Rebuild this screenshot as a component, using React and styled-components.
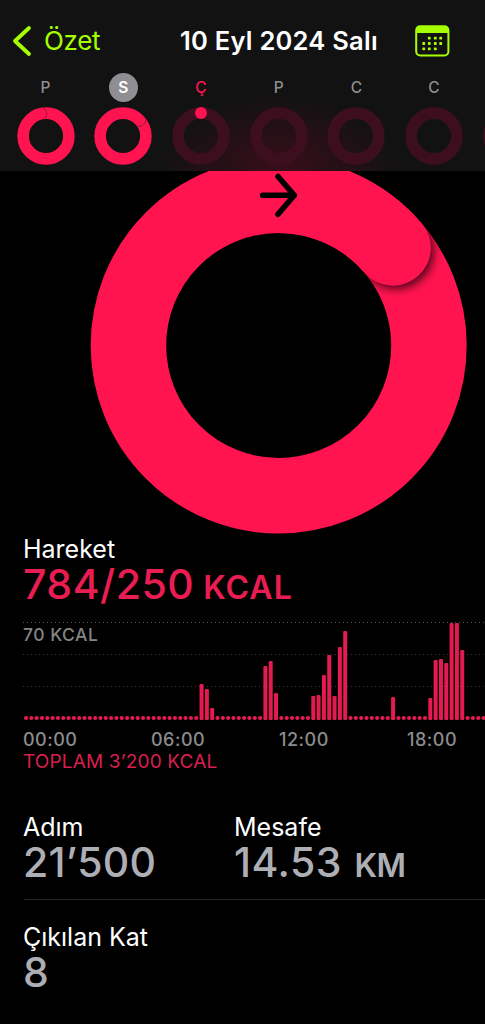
import styled, { createGlobalStyle } from 'styled-components';

const PINK = '#ff1450';
const LIME = '#a6ff00';

const GlobalStyle = createGlobalStyle`
  body {
    margin: 0;
    background: #000;
    font-family: Inter, 'Liberation Sans', sans-serif;
  }
`;

const Screen = styled.div`
  width: 485px;
  height: 1024px;
  overflow: hidden;
  background: #000;
  color: #fff;
`;

const Header = styled.header`
  box-sizing: border-box;
  height: 171px;
  padding-top: 18px;
  overflow: hidden;
  background: radial-gradient(ellipse 120px 75px at 279px 171px, #3a0d1a, rgba(18, 18, 18, 0)), #121212;
`;

const NavBar = styled.nav`
  display: grid;
  grid-template-columns: 180px 1fr auto;
  align-items: center;
  height: 45px;
  padding-right: 35px;
`;

const BackButton = styled.a`
  display: flex;
  align-items: center;
  gap: 12px;
  padding-left: 12px;
  color: ${LIME};
  font-size: 26px;
  letter-spacing: -0.3px;
`;

const NavTitle = styled.h1`
  margin: 0;
  font-size: 25.5px;
  font-weight: 600;
  letter-spacing: 0.25px;
  line-height: 30px;
  white-space: nowrap;
`;

const Week = styled.div`
  display: flex;
  margin: 10px 0 0 6.75px;
`;

const Day = styled.div`
  display: flex;
  flex: none;
  flex-direction: column;
  align-items: center;
  gap: 5px;
  width: 77.7px;
`;

const DayLetter = styled.span`
  width: 29px;
  height: 29px;
  border-radius: 50%;
  background: ${(props) => (props.$selected ? '#8e8e93' : 'transparent')};
  color: ${(props) => props.$color || '#8e8e8e'};
  font-size: 15.5px;
  font-weight: ${(props) => (props.$selected ? 600 : 500)};
  line-height: 30px;
  text-align: center;
`;

const RingHero = styled.section`
  height: 363px;

  svg {
    display: block;
  }
`;

const Content = styled.main`
  padding-left: 23px;
`;

const Label = styled.h2`
  margin: 0;
  font-size: 25px;
  font-weight: 400;
  line-height: 30px;
`;

const Value = styled.p`
  margin: 0;
  color: ${(props) => props.$color || '#aeaeb5'};
  font-size: 41px;
  font-weight: 500;
  line-height: 41px;
  letter-spacing: ${(props) => props.$spacing || '0.5px'};
  white-space: nowrap;
`;

const Unit = styled.span`
  margin-left: ${(props) => props.$gap}px;
  font-size: 32px;
  font-weight: 600;
  line-height: 1;
  letter-spacing: ${(props) => props.$spacing || '0'};
`;

const Chart = styled.svg`
  display: block;
`;

const Axis = styled.div`
  display: flex;
  height: 22px;
  color: #8c8c8c;
  font-size: 18px;
  font-weight: 500;
  line-height: 23.5px;
  letter-spacing: 0.5px;

  span {
    flex: none;
    width: 128px;
  }
`;

const Total = styled.p`
  margin: 0;
  color: #d81f50;
  font-size: 19px;
  line-height: 24px;
  letter-spacing: 0.15px;
`;

const Stats = styled.div`
  display: flex;
  margin-top: ${(props) => props.$top}px;
`;

const Stat = styled.div`
  flex: none;
  width: 211px;
`;

const Divider = styled.hr`
  height: 1px;
  margin: 16px 0 0 1px;
  border: 0;
  background: #242426;
`;

const days = [
  { letter: 'P', progress: 0.97 },
  { letter: 'S', progress: 0.137, selected: true, color: '#fff' },
  { letter: 'Ç', progress: 0, color: PINK },
  { letter: 'P' },
  { letter: 'C' },
  { letter: 'C' },
  { letter: '' },
];

// quarter-hour slots holding activity, value is the bar height in px
const activity = {
  33: 36, 34: 31, 35: 12,
  45: 54, 46: 59, 47: 27,
  54: 24, 55: 25, 56: 45, 57: 65, 58: 24, 59: 73, 60: 89,
  69: 23,
  76: 22, 77: 60, 78: 61, 79: 57, 80: 97, 81: 97, 82: 70,
};
const slots = Array.from({ length: 88 }, (_, i) => activity[i] || 4);

function DayRing({ progress }) {
  const angle = (progress || 0) * Math.PI * 2;
  const x = 29 + Math.sin(angle) * 22.9;
  const y = 29 - Math.cos(angle) * 22.9;
  const deg = (progress || 0) * 360;
  return (
    <svg width="58" height="58" viewBox="0 0 58 58">
      <circle cx="29" cy="29" r="22.9" fill="none" stroke={progress ? PINK : '#3d0f1e'} strokeWidth="11.6" />
      {progress > 0 && (
        <path
          d="M-5.4 2A6.5 6.5 0 0 0 5.4 2"
          transform={`translate(${x} ${y}) rotate(${deg - 90})`}
          fill="none"
          stroke="#a00f38"
          strokeWidth="0.9"
        />
      )}
      {progress === 0 && <circle cx={x} cy={y} r="6" fill={PINK} />}
    </svg>
  );
}

function MoveRing() {
  return (
    <svg width="485" height="363" viewBox="0 171 485 363">
      <defs>
        <filter id="capShadow" x="-50%" y="-50%" width="200%" height="200%">
          <feGaussianBlur stdDeviation="5" />
        </filter>
        <clipPath id="ringClip">
          <path
            clipRule="evenodd"
            d="M278.7 157.5a188 188 0 1 1 0 376a188 188 0 1 1 0-376zM278.7 233a112.5 112.5 0 1 0 0 225a112.5 112.5 0 1 0 0-225z"
          />
        </clipPath>
      </defs>
      <circle cx="278.7" cy="345.5" r="150.25" fill="none" stroke={PINK} strokeWidth="75.5" />
      <g clipPath="url(#ringClip)">
        <circle cx="396" cy="251" r="37.5" fill="#20000a" opacity="0.85" filter="url(#capShadow)" />
      </g>
      <path d="M278.7 195.25A150.25 150.25 0 0 1 393 247.9" fill="none" stroke={PINK} strokeWidth="75.5" strokeLinecap="round" />
      <path
        d="M262.7 195.3H294.300M278 176.5L294.300 195.3L278 214.300"
        fill="none"
        stroke="#000"
        strokeWidth="5.6"
        strokeLinecap="round"
        strokeLinejoin="round"
      />
    </svg>
  );
}

function MoveChart() {
  return (
    <Chart width="462" height="123" viewBox="23 605 462 123">
      {[622.5, 654.5, 686.5].map((y, i) => (
        <line key={y} x1="23" x2="485" y1={y} y2={y} stroke={i ? '#3a3a3a' : '#555'} strokeDasharray="1 3" />
      ))}
      {slots.map((height, i) => (
        <rect key={i} x={24 + i * 5.32} y={720 - height} width="4" height={height} rx={height > 4 ? 1.2 : 1.8} fill="#e31b50" />
      ))}
      <text x="23" y="641" fill="#858585" fontSize="17.5" fontWeight="500" letterSpacing="0.5">
        70 KCAL
      </text>
    </Chart>
  );
}

function CalendarIcon() {
  const dots = [
    [14.3, 13.2], [20.3, 13.2], [25.7, 13.2],
    [8.7, 18.5], [14.3, 18.5], [20.3, 18.5], [25.7, 18.5],
    [8.7, 23.8], [14.3, 23.8], [20.3, 23.8],
  ];
  return (
    <svg width="35" height="32" viewBox="0 0 35 32">
      <rect x="1.2" y="1.2" width="32.2" height="29.2" rx="4" fill="none" stroke={LIME} strokeWidth="2" />
      <path d="M1 8V5a4 4 0 0 1 4-4h24.600a4 4 0 0 1 4 4v3z" fill={LIME} />
      {dots.map(([x, y]) => (
        <rect key={`${x}-${y}`} x={x - 1.4} y={y - 1.4} width="2.8" height="2.8" rx="0.7" fill={LIME} />
      ))}
    </svg>
  );
}

function App() {
  return (
    <>
      <GlobalStyle />
      <Screen>
        <Header>
          <NavBar>
            <BackButton>
              <svg width="20" height="32" viewBox="0 0 20 32">
                <path d="M17 3L3 16L17 29" fill="none" stroke={LIME} strokeWidth="3.8" strokeLinecap="round" strokeLinejoin="round" />
              </svg>
              Özet
            </BackButton>
            <NavTitle>10 Eyl 2024 Salı</NavTitle>
            <CalendarIcon />
          </NavBar>
          <Week>
            {days.map((day, i) => (
              <Day key={i}>
                <DayLetter $selected={day.selected} $color={day.color}>
                  {day.letter}
                </DayLetter>
                <DayRing progress={day.progress} />
              </Day>
            ))}
          </Week>
        </Header>
        <RingHero>
          <MoveRing />
        </RingHero>
        <Content>
          <Label>Hareket</Label>
          <Value $color="#ea1d53">
            784/250
            <Unit $gap={9} $spacing="1px">
              KCAL
            </Unit>
          </Value>
          <MoveChart />
          <Axis>
            <span>00:00</span>
            <span>06:00</span>
            <span>12:00</span>
            <span>18:00</span>
          </Axis>
          <Total>TOPLAM 3’200 KCAL</Total>
          <Stats $top={38}>
            <Stat>
              <Label>Adım</Label>
              <Value $spacing="0.2px">21’500</Value>
            </Stat>
            <Stat>
              <Label>Mesafe</Label>
              <Value>
                14.53
                <Unit $gap={12.5} $spacing="-0.5px">
                  KM
                </Unit>
              </Value>
            </Stat>
          </Stats>
          <Divider />
          <Stats $top={22}>
            <Stat>
              <Label>Çıkılan Kat</Label>
              <Value>8</Value>
            </Stat>
          </Stats>
        </Content>
      </Screen>
    </>
  );
}

export default App;
